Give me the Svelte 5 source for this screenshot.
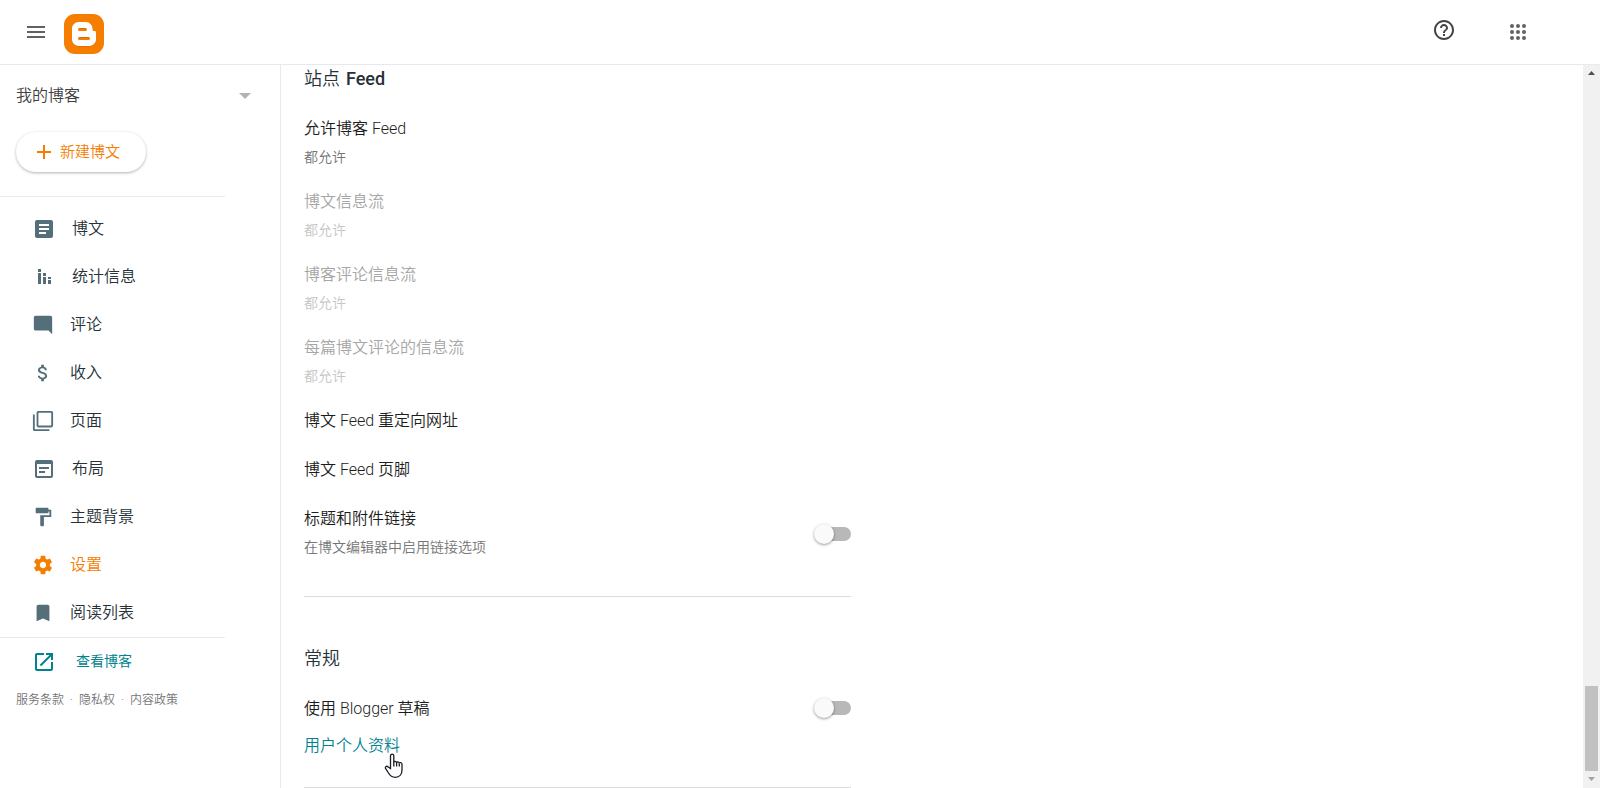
<script>
  const navItems = [
    { label: "博文", icon: "posts", wide: true },
    { label: "统计信息", icon: "stats", wide: true },
    { label: "评论", icon: "comments" },
    { label: "收入", icon: "earnings" },
    { label: "页面", icon: "pages" },
    { label: "布局", icon: "layout", wide: true },
    { label: "主题背景", icon: "theme" },
    { label: "设置", icon: "settings", active: true },
    { label: "阅读列表", icon: "reading" },
  ];

  const icons = {
    posts: "M19 3H5c-1.1 0-2 .9-2 2v14c0 1.1.9 2 2 2h14c1.1 0 2-.9 2-2V5c0-1.1-.9-2-2-2zm-5 14H7v-2h7v2zm3-4H7v-2h10v2zm0-4H7V7h10v2z",
    stats: "M6 4h3v3H6zM6 8h3v11H6zM11 8h3v3h-3zM11 12h3v7h-3zM16 12h3v2h-3zM16 15h3v4h-3z",
    comments: "M21.99 4c0-1.1-.89-2-1.99-2H4c-1.1 0-2 .9-2 2v12c0 1.1.9 2 2 2h14l4 4-.01-18z",
    earnings: "M11.8 10.9c-2.27-.59-3-1.2-3-2.15 0-1.09 1.01-1.85 2.7-1.85 1.78 0 2.44.85 2.5 2.1h2.21c-.07-1.72-1.12-3.3-3.21-3.81V3h-3v2.16c-1.94.42-3.5 1.68-3.5 3.61 0 2.31 1.91 3.46 4.7 4.13 2.5.6 3 1.48 3 2.41 0 .69-.49 1.79-2.7 1.79-2.06 0-2.87-.92-2.98-2.1h-2.2c.12 2.19 1.76 3.42 3.68 3.83V21h3v-2.15c1.95-.37 3.5-1.5 3.5-3.55 0-2.84-2.43-3.81-4.7-4.4z",
    pages: "M3 5H1v16c0 1.1.9 2 2 2h16v-2H3V5zm18-4H7c-1.1 0-2 .9-2 2v14c0 1.1.9 2 2 2h14c1.1 0 2-.9 2-2V3c0-1.1-.9-2-2-2zm0 16H7V3h14v14z",
    layout: "M19 3H5c-1.1 0-2 .9-2 2v14c0 1.1.9 2 2 2h14c1.1 0 2-.9 2-2V5c0-1.1-.9-2-2-2zm0 16H5V7h14v12zm-2-7H7v-2h10v2zm-4 4H7v-2h6v2z",
    theme: "M18 4V3c0-.55-.45-1-1-1H5c-.55 0-1 .45-1 1v4c0 .55.45 1 1 1h12c.55 0 1-.45 1-1V6h1v4H9v11c0 .55.45 1 1 1h2c.55 0 1-.45 1-1v-9h8V4h-3z",
    settings: "M19.43 12.98c.04-.32.07-.64.07-.98s-.03-.66-.07-.98l2.11-1.65c.19-.15.24-.42.12-.64l-2-3.46c-.12-.22-.39-.3-.61-.22l-2.49 1c-.52-.4-1.08-.73-1.69-.98l-.38-2.65C14.46 2.18 14.25 2 14 2h-4c-.25 0-.46.18-.49.42l-.38 2.65c-.61.25-1.17.59-1.69.98l-2.49-1c-.23-.09-.49 0-.61.22l-2 3.46c-.13.22-.07.49.12.64l2.11 1.65c-.04.32-.07.65-.07.98s.03.66.07.98l-2.11 1.65c-.19.15-.24.42-.12.64l2 3.46c.12.22.39.3.61.22l2.49-1c.52.4 1.08.73 1.69.98l.38 2.65c.03.24.24.42.49.42h4c.25 0 .46-.18.49-.42l.38-2.65c.61-.25 1.17-.59 1.69-.98l2.49 1c.23.09.49 0 .61-.22l2-3.46c.12-.22.07-.49-.12-.64l-2.11-1.65zM12 15.5c-1.93 0-3.5-1.57-3.5-3.5s1.57-3.5 3.5-3.5 3.5 1.57 3.5 3.5-1.57 3.5-3.5 3.5z",
    reading: "M17 3H7c-1.1 0-2 .9-2 2v16l7-3 7 3V5c0-1.1-.9-2-2-2z",
    open: "M19 19H5V5h7V3H5c-1.11 0-2 .9-2 2v14c0 1.1.89 2 2 2h14c1.1 0 2-.9 2-2v-7h-2v7zM14 3v2h3.59l-9.83 9.83 1.41 1.41L19 6.41V10h2V3h-7z",
    help: "M11 18h2v-2h-2v2zm1-16C6.48 2 2 6.48 2 12s4.48 10 10 10 10-4.48 10-10S17.52 2 12 2zm0 18c-4.41 0-8-3.59-8-8s3.59-8 8-8 8 3.59 8 8-3.59 8-8 8zm0-14c-2.21 0-4 1.79-4 4h2c0-1.1.9-2 2-2s2 .9 2 2c0 2-3 1.75-3 5h2c0-2.25 3-2.5 3-5 0-2.21-1.79-4-4-4z",
  };

  const feedSettings = [
    { title: "允许博客 Feed", value: "都允许" },
    { title: "博文信息流", value: "都允许", disabled: true },
    { title: "博客评论信息流", value: "都允许", disabled: true },
    { title: "每篇博文评论的信息流", value: "都允许", disabled: true },
    { title: "博文 Feed 重定向网址" },
    { title: "博文 Feed 页脚" },
  ];

  let enclosureLinks = false;
  let useDraft = false;
</script>

<div class="page">
  <header class="topbar">
    <button class="icon-button" aria-label="主菜单">
      <svg width="24" height="24" viewBox="0 0 24 24"><path d="M3 18h18v-2H3v2zm0-5h18v-2H3v2zm0-7v2h18V6H3z" /></svg>
    </button>
    <a class="logo" href="#home" aria-label="Blogger">
      <svg width="40" height="40" viewBox="0 0 40 40">
        <rect width="40" height="40" rx="11" fill="#f57d00" />
        <path fill="#c96500" d="M8 25v1c0 3.500 3 6.500 6.500 6.500h11c3.500 0 6.500-3 6.500-6.500v-1z" />
        <path fill="#fff" d="M14.500 8H22c3.500 0 6.500 3 6.500 6.500v1c0 1 .6 1.500 1.500 1.500h.5c1 0 1.500.7 1.500 1.500v7c0 3.500-3 6.500-6.500 6.500h-11C11 32 8 29 8 25.500v-11C8 11 11 8 14.500 8z" />
        <rect x="14" y="14" width="9" height="3" rx="1.500" fill="#f57d00" />
        <rect x="14" y="23" width="12" height="3" rx="1.500" fill="#f57d00" />
        <path d="M15 14.500h7M15 23.500h10" stroke="#d96e00" stroke-width="1" />
      </svg>
    </a>
    <div class="topbar-actions">
      <button class="icon-button help" aria-label="帮助">
        <svg width="24" height="24" viewBox="0 0 24 24"><path d={icons.help} /></svg>
      </button>
      <button class="icon-button" aria-label="Google 应用">
        <svg width="24" height="24" viewBox="0 0 24 24">
          {#each [6, 12, 18] as cy}
            {#each [6, 12, 18] as cx}
              <circle {cx} {cy} r="2" />
            {/each}
          {/each}
        </svg>
      </button>
    </div>
  </header>

  <div class="body">
    <aside class="sidebar">
      <button class="blog-picker">
        <span>我的博客</span>
        <svg width="12" height="6" viewBox="0 0 12 6"><path d="M0 0h12L6 6z" /></svg>
      </button>
      <button class="new-post">
        <svg width="14" height="14" viewBox="0 0 14 14"><path d="M6 0h2v6h6v2H8v6H6V8H0V6h6z" /></svg>
        <span>新建博文</span>
      </button>

      <nav>
        {#each navItems as item}
          <a href="#{item.icon}" class="nav-item" class:active={item.active} class:wide={item.wide}>
            <svg viewBox="0 0 24 24"><path d={icons[item.icon]} /></svg>
            <span>{item.label}</span>
          </a>
        {/each}
      </nav>

      <a class="view-blog" href="#blog">
        <svg width="24" height="24" viewBox="0 0 24 24"><path d={icons.open} /></svg>
        <span>查看博客</span>
      </a>
      <footer>
        <a href="#terms">服务条款</a><span>·</span><a href="#privacy">隐私权</a><span>·</span><a href="#policy">内容政策</a>
      </footer>
    </aside>

    <main>
      <section>
        <h2>站点 <b>Feed</b></h2>
        {#each feedSettings as setting}
          <div class="setting" class:disabled={setting.disabled}>
            <div class="setting-title">{setting.title}</div>
            {#if setting.value}
              <div class="setting-value">{setting.value}</div>
            {/if}
          </div>
        {/each}
        <div class="setting switch-row with-help">
          <label for="enclosure">
            <span class="setting-title">标题和附件链接</span>
            <span class="setting-value">在博文编辑器中启用链接选项</span>
          </label>
          <input id="enclosure" type="checkbox" bind:checked={enclosureLinks} />
        </div>
      </section>

      <section>
        <h2>常规</h2>
        <div class="switch-row">
          <label for="draft"><span class="setting-title">使用 Blogger 草稿</span></label>
          <input id="draft" type="checkbox" bind:checked={useDraft} />
        </div>
        <div class="profile">
          <a href="#profile">用户个人资料</a>
          <!-- hand pointer -->
          <svg class="pointer" width="20" height="26" viewBox="0 0 20 26">
            <path d="M6.500 15.500V3c0-2.600 3.300-2.600 3.300 0v6.500c0-1.700 2.800-1.500 2.800.4 0-1.500 2.700-1.300 2.700.6 0-1.400 2.700-1.200 2.700.8V17c0 4-2.300 7.300-6.700 7.300-3.600 0-5.400-1.800-6.800-4.300l-2.800-4.300c-1.200-2 1.200-3.200 2.500-1.700z" />
            <path d="M9.800 9v4.500M12.600 9.500v4M15.300 10.500v3" />
          </svg>
        </div>
      </section>
    </main>

    <div class="scrollbar" aria-hidden="true">
      <svg width="17" height="17" viewBox="0 0 17 17"><path fill="#505050" d="M5 10h7L8.500 6z" /></svg>
      <div class="track"><div class="thumb"></div></div>
      <svg width="17" height="17" viewBox="0 0 17 17"><path fill="#a3a3a3" d="M5 6h7l-3.500 4z" /></svg>
    </div>
  </div>
</div>

<style>
  :global(body) {
    margin: 0;
    background: #fff;
  }

  .page {
    display: flex;
    flex-direction: column;
    height: 100vh;
    overflow: hidden;
    font-family: Roboto, "Noto Sans CJK SC", sans-serif;
    font-size: 16px;
    font-weight: 350;
    color: #1c1c1c;
  }

  button {
    border: 0;
    padding: 0;
    background: none;
    font: inherit;
    cursor: pointer;
  }

  a {
    text-decoration: none;
    color: inherit;
  }

  svg {
    display: block;
    flex: none;
    fill: currentColor;
  }

  .topbar {
    display: flex;
    align-items: center;
    height: 64px;
    padding: 0 70px 0 24px;
    border-bottom: 1px solid #e5e9f0;
  }

  .icon-button {
    color: #5f6368;
  }

  .logo {
    margin-left: 16px;
    padding-top: 4px;
  }

  .topbar-actions {
    display: flex;
    gap: 50px;
    margin-left: auto;
  }

  .help {
    padding-bottom: 4px;
    color: #444;
  }

  .body {
    display: flex;
    flex: 1;
    min-height: 0;
  }

  /* Sidebar */
  .sidebar {
    flex: none;
    width: 280px;
    border-right: 1px solid #e8eaed;
  }

  .sidebar button span {
    padding-bottom: 3px;
  }

  .nav-item span,
  .view-blog span {
    padding-bottom: 4px;
  }

  .blog-picker {
    display: flex;
    align-items: center;
    justify-content: space-between;
    width: 100%;
    height: 61px;
    padding: 0 29px 0 16px;
    color: #3c4043;
  }

  .blog-picker svg {
    color: #b3b3b3;
  }

  .new-post {
    display: flex;
    align-items: center;
    gap: 9px;
    height: 40px;
    margin: 6px 0 24px 16px;
    padding: 0 26px 0 21px;
    border-radius: 20px;
    box-shadow: 0 1px 3px rgba(0, 0, 0, 0.3);
    color: #f57d00;
    font-size: 15px;
  }

  nav {
    margin-right: 55px;
    padding-top: 8px;
    border-top: 1px solid #ebebeb;
    border-bottom: 1px solid #ebebeb;
  }

  .nav-item {
    display: flex;
    align-items: center;
    gap: 16px;
    height: 48px;
    padding-left: 32px;
    color: #263238;
  }

  .nav-item svg {
    width: 22px;
    height: 22px;
    color: #546e7a;
  }

  .nav-item.wide svg {
    width: 24px;
    height: 24px;
  }

  .nav-item.active,
  .nav-item.active svg {
    color: #f57d00;
  }

  .view-blog {
    display: flex;
    align-items: center;
    gap: 20px;
    height: 48px;
    padding-left: 32px;
    color: #00838f;
    font-size: 14px;
    font-weight: 400;
  }

  footer {
    display: flex;
    gap: 6px;
    padding: 6px 16px;
    font-size: 12px;
    line-height: 16px;
    color: #757575;
  }

  /* Settings */
  main {
    flex: 1;
    min-width: 0;
    padding: 2px 23px 0;
    overflow: hidden;
  }

  section {
    max-width: 547px;
    margin-bottom: 50px;
    padding-bottom: 17px;
    border-bottom: 1px solid #dcdcdc;
  }

  section:last-child {
    padding-bottom: 29px;
  }

  h2 {
    display: flex;
    gap: 6px;
    margin: 0 0 25px;
    font-size: 18px;
    font-weight: 350;
    line-height: 24px;
    color: #263238;
  }

  h2 b {
    font-weight: 500;
  }

  .setting {
    margin-bottom: 24px;
  }

  .setting-title {
    display: block;
    line-height: 25px;
  }

  .setting-value {
    display: block;
    padding-top: 9px;
    font-size: 14px;
    line-height: 15px;
    color: #757575;
  }

  .disabled .setting-title {
    color: #a6a6a6;
  }

  .disabled .setting-value {
    color: #c6c6c6;
  }

  .switch-row {
    display: flex;
    align-items: center;
    justify-content: space-between;
  }

  input[type="checkbox"] {
    appearance: none;
    position: relative;
    width: 36px;
    height: 14px;
    margin: 0 0 2px;
    border-radius: 7px;
    background: #b8b8b8;
    cursor: pointer;
  }

  .with-help input[type="checkbox"] {
    margin-top: 8px;
  }

  input[type="checkbox"]::before {
    content: "";
    position: absolute;
    top: -3px;
    left: -1px;
    width: 20px;
    height: 20px;
    border-radius: 50%;
    background: #fafafa;
    box-shadow: 0 1px 3px rgba(0, 0, 0, 0.4);
  }

  input[type="checkbox"]:checked::before {
    left: 17px;
    background: #f57d00;
  }

  .profile {
    position: relative;
    margin-top: 12px;
    line-height: 25px;
    color: #00838f;
  }

  .pointer {
    position: absolute;
    top: 20px;
    left: 80px;
    fill: #fff;
    stroke: #1c1c28;
    stroke-width: 1.3;
  }

  /* Scrollbar */
  .scrollbar {
    display: flex;
    flex-direction: column;
    width: 17px;
    background: #f1f1f1;
  }

  .track {
    display: flex;
    flex: 1;
    flex-direction: column;
    justify-content: flex-end;
    padding: 0 2px;
  }

  .thumb {
    height: 85px;
    background: #c1c1c1;
  }
</style>
